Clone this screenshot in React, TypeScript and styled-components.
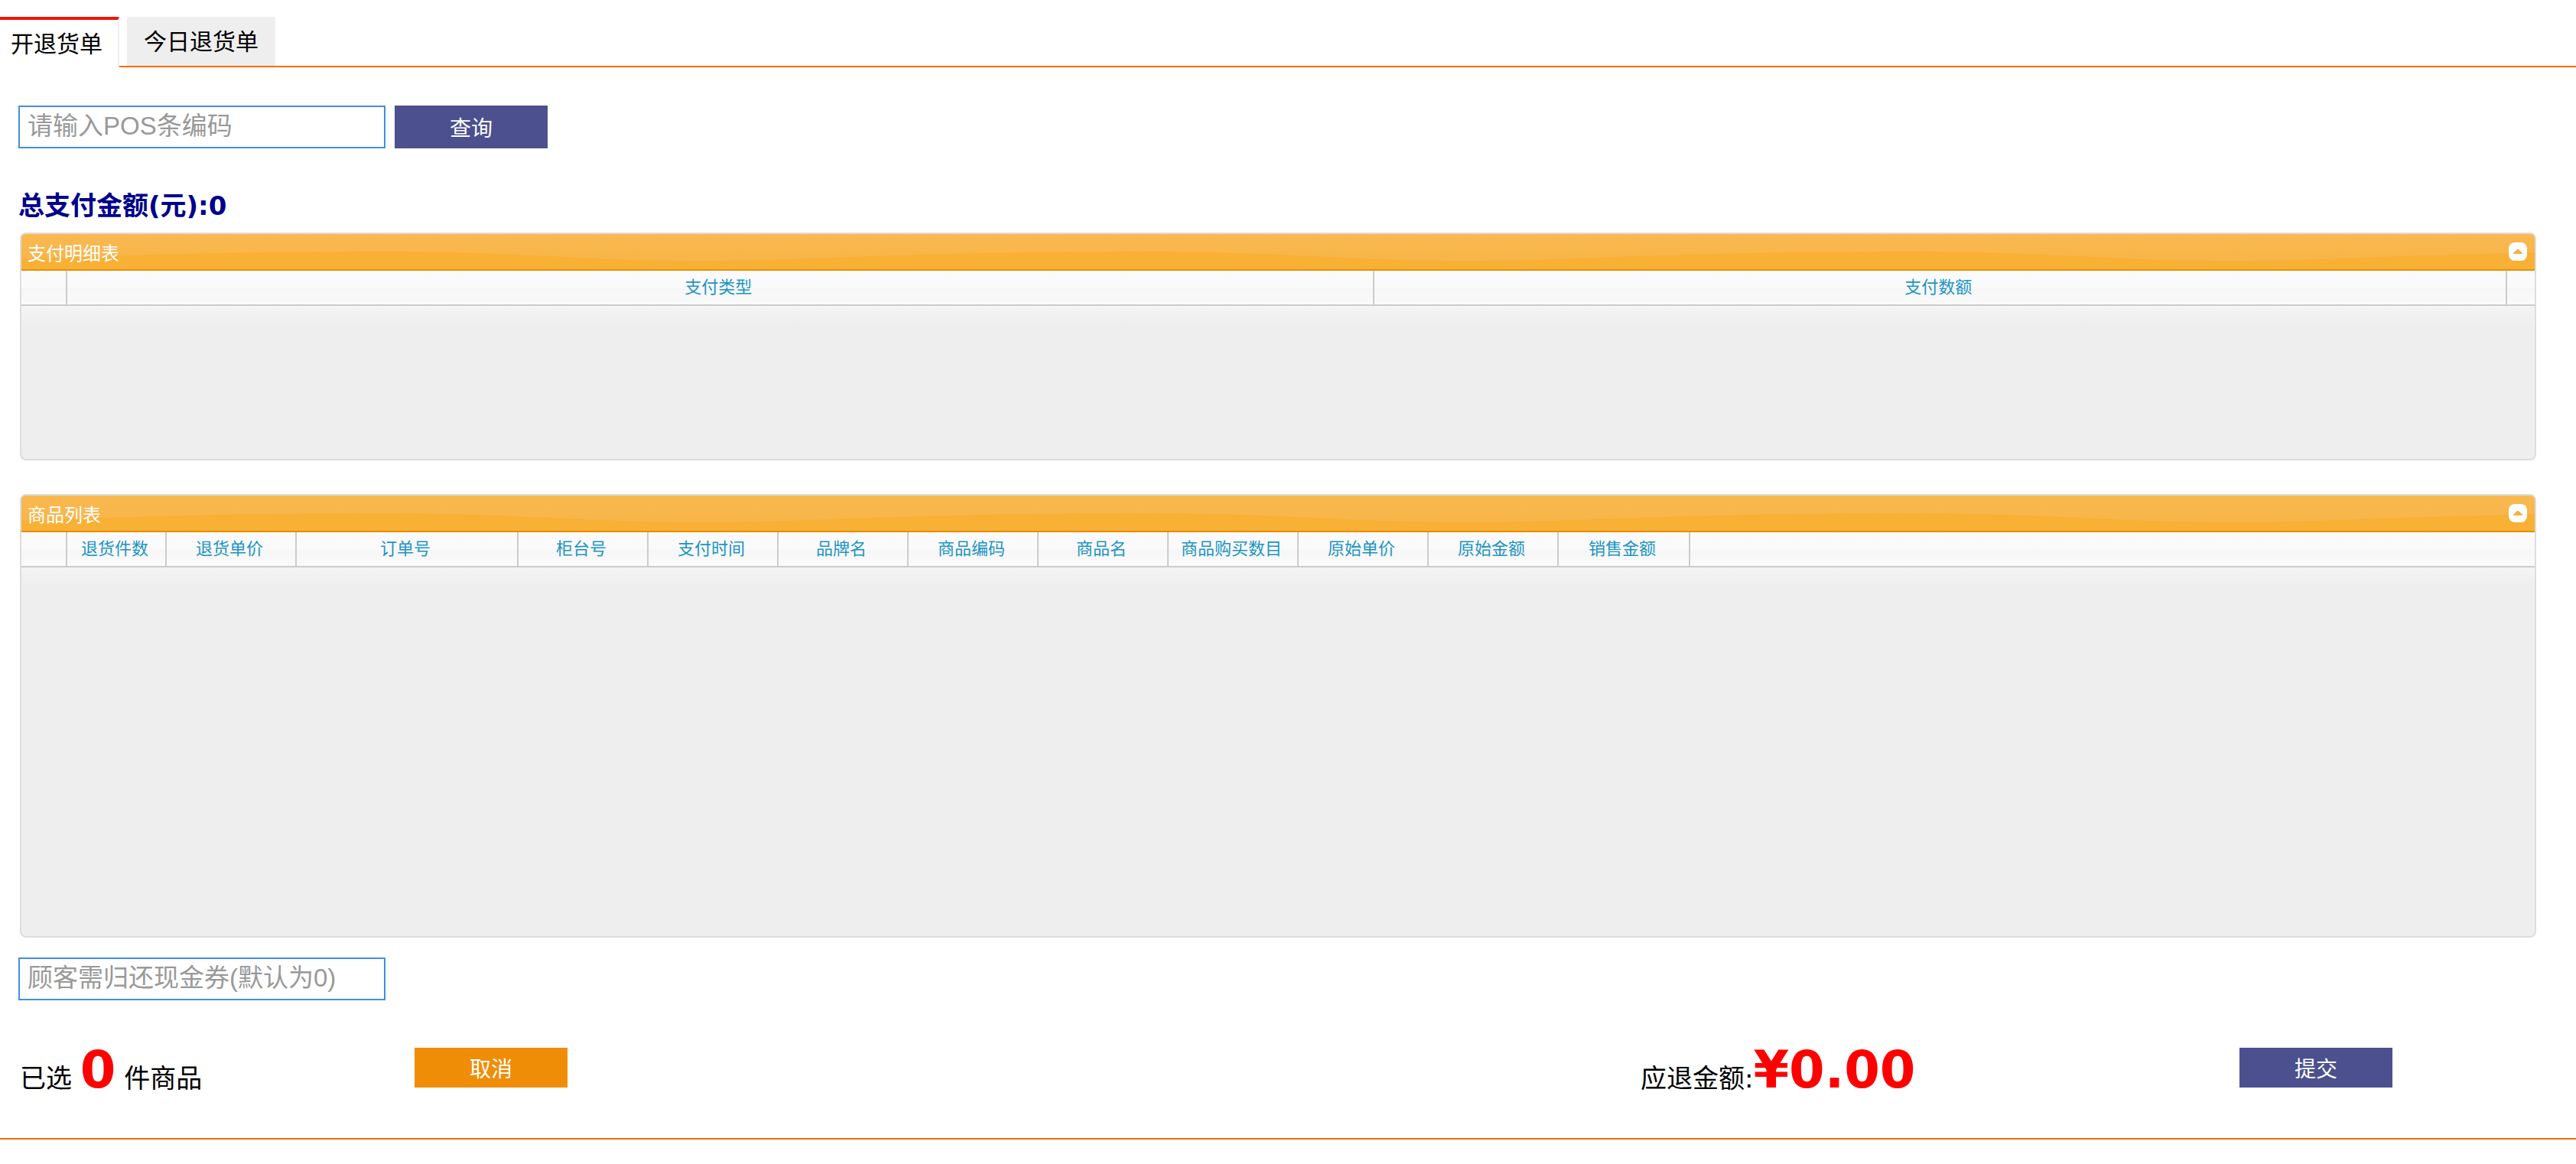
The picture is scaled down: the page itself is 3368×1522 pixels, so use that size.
import React from 'react';
import styled, { createGlobalStyle } from 'styled-components';

const sans = '"DejaVu Sans", "Noto Sans CJK SC", sans-serif';
const arial = '"Liberation Sans", "Noto Sans CJK SC", sans-serif';

const GlobalStyle = createGlobalStyle`
  * { box-sizing: border-box; }
  body { margin: 0; background: #fff; color: #000; font-family: ${sans}; }
`;

const Page = styled.div`
  display: flex;
  flex-direction: column;
  padding-top: 22px;
`;

const Tabs = styled.nav`
  display: flex;
  height: 66px;
`;

const TabRest = styled.div`
  flex: 1;
  display: flex;
  padding-left: 10px;
  border-bottom: 2px solid #ff6a00;
`;

const Tab = styled.button<{ $active?: boolean }>`
  margin: 0;
  border: 0;
  border-radius: 0;
  padding: ${p => (p.$active ? '2px 20px 0 14px' : '2px 22px 0')};
  border-top: ${p => (p.$active ? '4px solid #eb1800' : '0')};
  border-right: ${p => (p.$active ? '2px solid #eee' : '0')};
  background: ${p => (p.$active ? '#fff' : '#eee')};
  color: #000;
  font: 30px/60px ${arial};
`;

const Content = styled.main`
  display: flex;
  flex-direction: column;
  align-items: stretch;
  padding: 50px 52px 0 24px;
`;

const SearchRow = styled.form`
  display: flex;
  gap: 12px;
`;

const TextBox = styled.input`
  width: 480px;
  height: 56px;
  border: 2px solid #428fe0;
  border-radius: 0;
  padding: 0 10px 2px;
  background: #fff;
  font: 33px ${arial};
  &::placeholder { color: #999; opacity: 1; }
`;

const Action = styled.button<{ $tone?: string; $tall?: boolean }>`
  width: 200px;
  height: ${p => (p.$tall ? 56 : 52)}px;
  margin: 0;
  padding: 0;
  border: 0;
  border-radius: 0;
  background: ${p => p.$tone || '#4c508e'};
  color: #fff;
  font: 28px ${arial};
`;

const Total = styled.h2`
  margin: 50px 0 10px;
  color: #00008b;
  font: bold 34px/50px ${sans};
`;

const Panel = styled.section<{ $size: number; $gap: number }>`
  display: flex;
  flex-direction: column;
  min-height: ${p => p.$size}px;
  margin: 0 0 ${p => p.$gap}px 2px;
  border: 2px solid #ddd;
  border-radius: 8px;
  overflow: hidden;
  background: #eee linear-gradient(#f4f4f4, #eee) 0 94px / 100% 26px no-repeat;
`;

const PanelHead = styled.header`
  position: relative;
  display: flex;
  align-items: center;
  justify-content: space-between;
  height: 48px;
  padding: 0 10px 0 8px;
  border-bottom: 2px solid #e78f08;
  background: #f8b035;
  color: #fff;
`;

const WaveArt = styled.svg`
  position: absolute;
  inset: 0;
  width: 100%;
  height: 100%;
`;

const PanelTitle = styled.h3`
  position: relative;
  margin: 0;
  padding-top: 6px;
  font: 24px/40px ${arial};
`;

const Collapse = styled.button`
  position: relative;
  display: flex;
  margin: 0;
  padding: 0;
  border: 0;
  background: none;
`;

const Grid = styled.table`
  width: 100%;
  table-layout: fixed;
  border-collapse: separate;
  border-spacing: 0;
  background: linear-gradient(#fbfbfb, #fafafa 50%, #f6f6f6 50%, #fbfbfb);
`;

const Head = styled.th`
  height: 46px;
  padding: 0 4px 0 0;
  border-right: 2px solid #ccc;
  border-bottom: 2px solid #ccc;
  color: #1c94c4;
  font: 22px/44px ${arial};
  white-space: nowrap;
  &:last-child { border-right: 0; }
`;

const Footer = styled.footer`
  display: grid;
  grid-template-columns: 518fr 1601fr 785fr 388fr;
  align-items: start;
  height: 118px;
  margin-top: 62px;
`;

const Summary = styled.p`
  margin: 0;
  padding-left: 2px;
  font: 34px/58px ${sans};
  white-space: nowrap;
`;

const Figure = styled.strong`
  color: #f00;
  font-size: 67px;
`;

const BottomRule = styled.hr`
  width: 100%;
  height: 2px;
  margin: 0;
  border: 0;
  background: #ff6a00;
`;

type Column = { label: string; width?: string };

const paymentColumns: Column[] = [
  { label: '', width: '60px' },
  { label: '支付类型', width: '52%' },
  { label: '支付数额' },
  { label: '', width: '36px' },
];

const goodsColumns: Column[] = [
  { label: '', width: '60px' },
  { label: '退货件数', width: '130px' },
  { label: '退货单价', width: '170px' },
  { label: '订单号', width: '290px' },
  ...['柜台号', '支付时间', '品牌名', '商品编码', '商品名', '商品购买数目', '原始单价', '原始金额'].map(
    label => ({ label, width: '170px' }),
  ),
  { label: '销售金额', width: '172px' },
  { label: '' },
];

function Wave({ id }: { id: string }) {
  return (
    <WaveArt aria-hidden="true">
      <defs>
        <linearGradient id={`${id}-shade`} x1="0" y1="0" x2="0" y2="1">
          <stop offset="0" stopColor="#f9b94f" />
          <stop offset="1" stopColor="#f8b549" />
        </linearGradient>
        <pattern id={id} width="1000" height="46" patternUnits="userSpaceOnUse">
          <path
            d="M0 0H1000V33C965 34 930 35 890 35C750 35 640 23 470 23C270 23 130 28 0 33Z"
            fill={`url(#${id}-shade)`}
          />
        </pattern>
      </defs>
      <rect width="100%" height="46" fill={`url(#${id})`} />
    </WaveArt>
  );
}

function DataPanel(props: { id: string; title: string; columns: Column[]; size: number; gap: number }) {
  return (
    <Panel $size={props.size} $gap={props.gap} aria-label={props.title}>
      <PanelHead>
        <Wave id={props.id} />
        <PanelTitle>{props.title}</PanelTitle>
        <Collapse type="button" aria-label="收起">
          <svg width="24" height="24" viewBox="0 0 24 24">
            <rect width="24" height="24" rx="8" fill="#fff" />
            <path d="M6 15V14L11 9H13L18 14V15Z" fill="#f8b040" />
          </svg>
        </Collapse>
      </PanelHead>
      <Grid>
        <colgroup>
          {props.columns.map((c, i) => <col key={i} width={c.width} />)}
        </colgroup>
        <thead>
          <tr>
            {props.columns.map((c, i) => <Head key={i} scope="col">{c.label}</Head>)}
          </tr>
        </thead>
      </Grid>
    </Panel>
  );
}

export default function App() {
  return (
    <>
      <GlobalStyle />
      <Page>
        <Tabs>
          <Tab type="button" $active>开退货单</Tab>
          <TabRest>
            <Tab type="button">今日退货单</Tab>
          </TabRest>
        </Tabs>
        <Content>
          <SearchRow onSubmit={e => e.preventDefault()}>
            <TextBox aria-label="POS条编码" placeholder="请输入POS条编码" />
            <Action $tall type="submit">查询</Action>
          </SearchRow>
          <Total>总支付金额(元):0</Total>
          <DataPanel id="wave-pay" title="支付明细表" columns={paymentColumns} size={298} gap={44} />
          <DataPanel id="wave-goods" title="商品列表" columns={goodsColumns} size={580} gap={26} />
          <TextBox aria-label="顾客需归还现金券" placeholder="顾客需归还现金券(默认为0)" />
          <Footer>
            <Summary>已选 <Figure>0</Figure> 件商品</Summary>
            <Action type="button" $tone="#f08d06">取消</Action>
            <Summary>应退金额:<Figure>¥0.00</Figure></Summary>
            <Action type="button">提交</Action>
          </Footer>
        </Content>
        <BottomRule />
      </Page>
    </>
  );
}
